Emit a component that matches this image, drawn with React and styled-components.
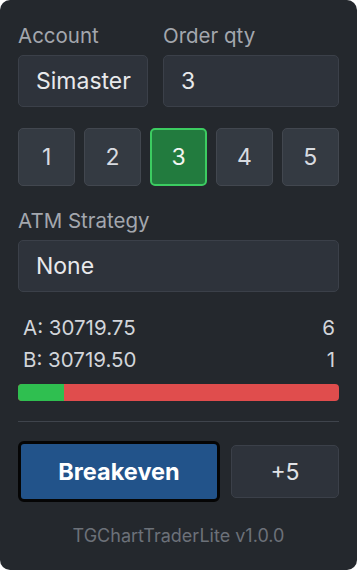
import React from "react";
import styled, { createGlobalStyle } from "styled-components";

const GlobalStyle = createGlobalStyle`
  html, body {
    margin: 0;
    padding: 0;
    background: #ffffff;
  }
  * {
    box-sizing: border-box;
  }
`;

const Panel = styled.div`
  width: 357px;
  height: 570px;
  background: #24282d;
  border-radius: 10px;
  padding: 24px 18px 0 18px;
  font-family: Inter, "Noto Sans", sans-serif;
  display: flex;
  flex-direction: column;
`;

const FieldRow = styled.div`
  display: grid;
  grid-template-columns: 130px 1fr;
  gap: 15px;
`;

const Field = styled.div`
  display: flex;
  flex-direction: column;
`;

const Label = styled.div`
  color: #a3a7ae;
  font-size: 20.5px;
  line-height: 24px;
  height: 31px;
`;

const InputBox = styled.div`
  height: 52px;
  background: #2e333b;
  border: 1px solid #3b4049;
  border-radius: 5px;
  color: #e8e9eb;
  font-size: 23px;
  display: flex;
  align-items: center;
  padding: 0 17px;
`;

const QtyGrid = styled.div`
  display: grid;
  grid-template-columns: repeat(5, 1fr);
  gap: 8.5px;
  margin-top: 21px;
`;

const QtyButton = styled.div`
  height: 57.5px;
  border-radius: 5px;
  display: flex;
  align-items: center;
  justify-content: center;
  font-size: 23px;
  background: ${p => (p.$active ? "#227b3e" : "#343a42")};
  border: ${p => (p.$active ? "2px solid #3ccc61" : "1px solid #42474f")};
  color: ${p => (p.$active ? "#f2f5f2" : "#d8dbe0")};
`;

const Section = styled(Field)`
  margin-top: 23px;
`;

const Quotes = styled.div`
  margin-top: 24px;
  padding: 0 4px 0 5px;
  display: flex;
  flex-direction: column;
  gap: 8px;
`;

const QuoteLine = styled.div`
  display: flex;
  justify-content: space-between;
  color: #d2d5da;
  font-size: 20.5px;
  line-height: 24px;
`;

const DepthBar = styled.div`
  margin-top: 12px;
  height: 17.5px;
  border-radius: 4px;
  overflow: hidden;
  background: #e04d4d;
  display: flex;
`;

const BidFill = styled.div`
  background: #2fbf50;
  height: 100%;
`;

const Divider = styled.div`
  margin-top: 20px;
  height: 1px;
  background: #3f444c;
`;

const ActionRow = styled.div`
  margin-top: 19px;
  display: flex;
  align-items: center;
  gap: 11px;
`;

const PrimaryButton = styled.div`
  flex: 1;
  height: 61px;
  background: #22538a;
  border: 3px solid #050505;
  border-radius: 6px;
  color: #ffffff;
  font-weight: 700;
  font-size: 23.5px;
  display: flex;
  align-items: center;
  justify-content: center;
`;

const SecondaryButton = styled.div`
  width: 108px;
  height: 53px;
  background: #2e333b;
  border: 1px solid #3b4049;
  border-radius: 5px;
  color: #e0e2e6;
  font-size: 23px;
  display: flex;
  align-items: center;
  justify-content: center;
`;

const Footer = styled.div`
  margin-top: 23px;
  text-align: center;
  color: #6c7179;
  font-size: 18px;
`;

export default function App() {
  const ask = { price: "30719.75", size: 6 };
  const bid = { price: "30719.50", size: 1 };
  const bidShare = (bid.size / (ask.size + bid.size)) * 100;

  return (
    <>
      <GlobalStyle />
      <Panel>
        <FieldRow>
          <Field>
            <Label>Account</Label>
            <InputBox>Simaster</InputBox>
          </Field>
          <Field>
            <Label>Order qty</Label>
            <InputBox>3</InputBox>
          </Field>
        </FieldRow>
        <QtyGrid>
          {[1, 2, 3, 4, 5].map(n => (
            <QtyButton key={n} $active={n === 3}>
              {n}
            </QtyButton>
          ))}
        </QtyGrid>
        <Section>
          <Label>ATM Strategy</Label>
          <InputBox>None</InputBox>
        </Section>
        <Quotes>
          <QuoteLine>
            <span>A: {ask.price}</span>
            <span>{ask.size}</span>
          </QuoteLine>
          <QuoteLine>
            <span>B: {bid.price}</span>
            <span>{bid.size}</span>
          </QuoteLine>
        </Quotes>
        <DepthBar>
          <BidFill style={{ width: `${bidShare}%` }} />
        </DepthBar>
        <Divider />
        <ActionRow>
          <PrimaryButton>Breakeven</PrimaryButton>
          <SecondaryButton>+5</SecondaryButton>
        </ActionRow>
        <Footer>TGChartTraderLite v1.0.0</Footer>
      </Panel>
    </>
  );
}
